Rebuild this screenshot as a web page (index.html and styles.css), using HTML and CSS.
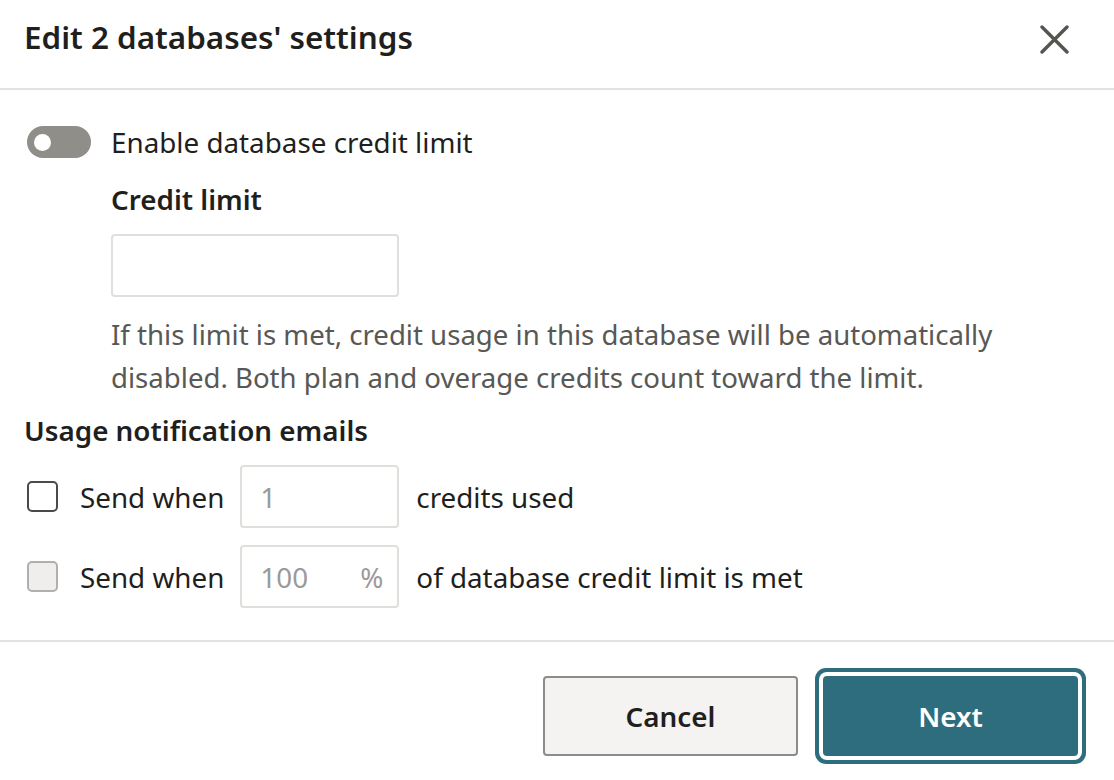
FILE: index.html
```html
<!DOCTYPE html>
<html lang="en">
<head>
<meta charset="utf-8">
<title>Edit 2 databases' settings</title>
<link rel="stylesheet" href="styles.css">
</head>
<body>
<div class="dialog">
  <header class="dlg-header">
    <h1 class="dlg-title">Edit 2 databases' settings</h1>
    <button class="close-btn" aria-label="Close">
      <svg width="29" height="29" viewBox="0 0 29 29"><path d="M2 2 L27 27 M27 2 L2 27" stroke="#55554f" stroke-width="3.4" stroke-linecap="round" fill="none"/></svg>
    </button>
  </header>
  <main class="dlg-body">
    <div class="toggle-row">
      <span class="toggle"><span class="knob"></span></span>
      <span class="toggle-label">Enable database credit limit</span>
    </div>
    <div class="limit-section">
      <div class="field-label">Credit limit</div>
      <div class="text-input limit-input"></div>
      <p class="help">If this limit is met, credit usage in this database will be automatically disabled. Both plan and overage credits count toward the limit.</p>
    </div>
    <div class="section-label">Usage notification emails</div>
    <div class="notify-row">
      <span class="checkbox"></span>
      <span class="row-text">Send when</span>
      <div class="text-input small-input"><span class="ph">1</span></div>
      <span class="row-text">credits used</span>
    </div>
    <div class="notify-row">
      <span class="checkbox disabled"></span>
      <span class="row-text">Send when</span>
      <div class="text-input small-input"><span class="ph">100</span><span class="ph">%</span></div>
      <span class="row-text">of database credit limit is met</span>
    </div>
  </main>
  <footer class="dlg-footer">
    <button class="btn btn-cancel">Cancel</button>
    <button class="btn btn-next">Next</button>
  </footer>
</div>
</body>
</html>
```
FILE: styles.css
```css
* { box-sizing: border-box; }
html, body { margin: 0; padding: 0; background: #fff; }
body {
  font-family: "Noto Sans", "Open Sans", sans-serif;
  color: #1f1f1e;
  width: 1114px;
  height: 780px;
  overflow: hidden;
}
.dialog { display: flex; flex-direction: column; }
.dlg-header {
  height: 90px;
  border-bottom: 2px solid #e2e2e0;
  display: flex;
  align-items: flex-start;
  justify-content: space-between;
  padding: 17px 45px 0 24px;
}
.dlg-title {
  margin: 0;
  font-size: 31.4px;
  font-weight: 600;
  line-height: 40px;
  color: #1f1f1e;
}
.close-btn {
  border: 0;
  background: none;
  padding: 0;
  margin-top: 8px;
  width: 29px;
  height: 29px;
  display: flex;
}
.dlg-body {
  padding: 36px 24px 32px 24px;
  display: flex;
  flex-direction: column;
}
.toggle-row {
  display: flex;
  align-items: center;
  height: 32px;
  padding-left: 3px;
}
.toggle {
  width: 64px;
  height: 32px;
  border-radius: 16px;
  background: #8f8e89;
  display: flex;
  align-items: center;
  padding-left: 7px;
}
.knob {
  width: 17px;
  height: 17px;
  border-radius: 50%;
  background: #fff;
}
.toggle-label {
  margin-left: 20px;
  font-size: 27.8px;
  line-height: 32px;
}
.limit-section {
  padding-left: 87px;
  display: flex;
  flex-direction: column;
  align-items: flex-start;
}
.field-label {
  margin-top: 23px;
  font-size: 27.8px;
  font-weight: 600;
  line-height: 36px;
}
.text-input {
  border: 2px solid #e0dfdb;
  border-radius: 4px;
  height: 63px;
  background: #fff;
}
.limit-input {
  margin-top: 17px;
  width: 288px;
}
.help {
  margin: 16px 0 0 0;
  font-size: 27.6px;
  line-height: 43px;
  color: #585855;
  max-width: 920px;
}
.section-label {
  margin-top: 13px;
  font-size: 27.8px;
  font-weight: 600;
  line-height: 36px;
}
.notify-row {
  display: flex;
  align-items: center;
  margin-top: 17px;
  padding-left: 3px;
}
.checkbox {
  width: 31px;
  height: 31px;
  border: 2.5px solid #4a4a47;
  border-radius: 5px;
  background: #fff;
  margin-right: 22px;
}
.checkbox.disabled {
  border-color: #b0afab;
  background: #efeeec;
}
.row-text {
  font-size: 27.8px;
  line-height: 36px;
}
.small-input {
  width: 159px;
  margin: 0 17px 0 16px;
  display: flex;
  align-items: center;
  justify-content: space-between;
  padding: 0 14px 0 18px;
}
.ph {
  font-size: 27.8px;
  color: #9b9a97;
}
.dlg-footer {
  border-top: 2px solid #e2e2e0;
  display: flex;
  justify-content: flex-end;
  gap: 25px;
  padding: 34px 36px 24px 0;
}
.btn {
  width: 255px;
  height: 80px;
  border-radius: 4px;
  font-family: "Noto Sans", "Open Sans", sans-serif;
  font-size: 27.8px;
  font-weight: 600;
}
.btn-cancel {
  background: #f4f3f1;
  border: 2px solid #8d8c88;
  color: #1f1f1e;
}
.btn-next {
  background: #2e6d7e;
  border: 0;
  color: #fff;
  box-shadow: 0 0 0 4px #fff, 0 0 0 8px #2e6d7e;
}
```
